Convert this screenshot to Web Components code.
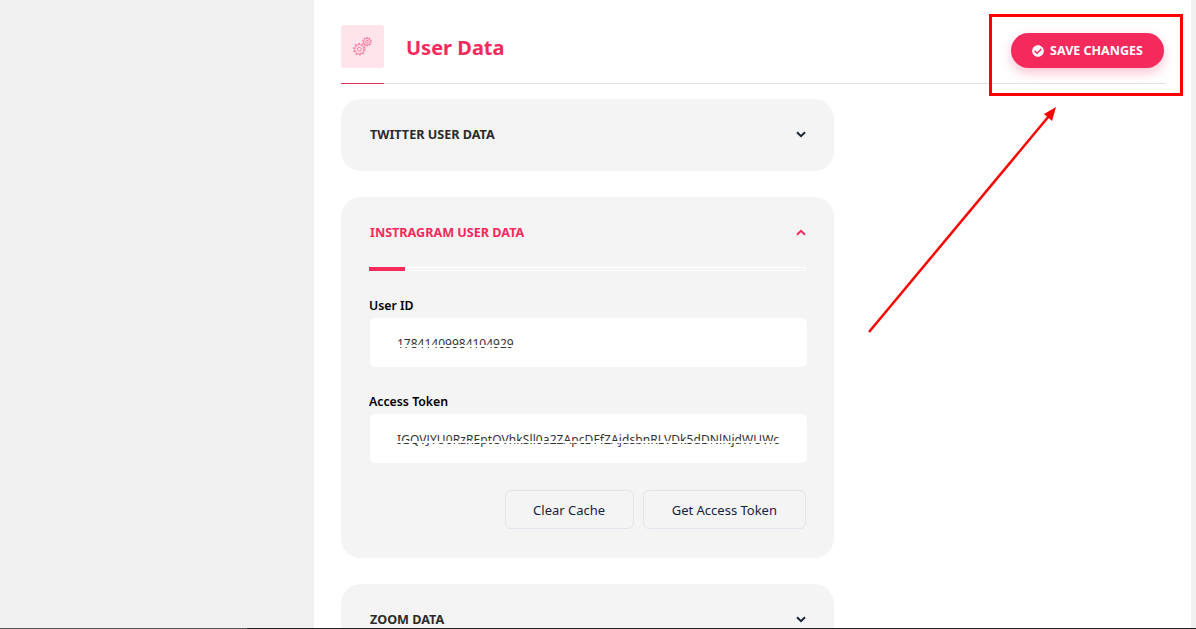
<!DOCTYPE html>
<html>
<head>
<meta charset="utf-8">
<title>User Data</title>
<style>
	html, body { margin: 0; height: 100%; overflow: hidden; background: #fff; }
	body { font-family: "Noto Sans", "Liberation Sans", sans-serif; }
</style>
</head>
<body>
<settings-page>
	<page-header title="User Data"></page-header>
	<data-card heading="TWITTER USER DATA"></data-card>
	<data-card heading="INSTRAGRAM USER DATA" open>
		<data-field label="User ID" value="17841409984104929"></data-field>
		<data-field label="Access Token" value="IGQVJYU0RzREptOVhkSll0a2ZApcDFfZAjdsbnRLVDk5dDNlNjdWUWc" style="--value-spacing: 0.09px"></data-field>
		<div slot="actions">
			<plain-button style="padding: 0 27.5px">Clear Cache</plain-button>
			<plain-button>Get Access Token</plain-button>
		</div>
	</data-card>
	<data-card heading="ZOOM DATA"></data-card>
</settings-page>
<annotation-layer></annotation-layer>

<script>
class SettingsPage extends HTMLElement {
	constructor() {
		super();
		this.attachShadow({ mode: 'open' });
		this.shadowRoot.innerHTML = `
		<style>
			:host { display: grid; grid-template-columns: 314px 1fr 5px; height: 629px; overflow: hidden; }
			.side { background: #f0f0f0; }
			.main { background: #fff; padding: 25px 25px 0 27px; overflow: hidden; }
			.edge { background: #f0f0f0; }
		</style>
		<div class="side"></div>
		<div class="main"><slot></slot></div>
		<div class="edge"></div>
		`
	}
}
customElements.define('settings-page', SettingsPage);

class PageHeader extends HTMLElement {
	constructor() {
		super();
		this.attachShadow({ mode: 'open' });
		this.shadowRoot.innerHTML = `
		<style>
			:host { display: flex; align-items: center; position: relative; box-sizing: border-box; padding-bottom: 15px; border-bottom: 1px solid #e2e2e6; margin-bottom: 15px; height: 59px; }
			.icon { width: 43px; height: 43px; border-radius: 3px; background: #ffe4eb; display: flex; align-items: center; justify-content: center; }
			h1 { margin: 2px 0 0 22px; font-size: 20px; font-weight: 700; color: #f52a5c; line-height: 43px; flex: 1; }
			/* accent under the icon box */
			.accent { position: absolute; left: 0; bottom: -1px; width: 43px; height: 1px; background: #e0305c; }
			.save { margin: 8px 2px 0 0; width: 153px; height: 35px; border-radius: 18px; background: #f52a5c; color: #fff; display: flex; align-items: center; justify-content: center; gap: 6px; font-size: 12.5px; font-weight: 700; box-shadow: 0 5px 12px rgba(245,42,92,.28); }
			.save svg { width: 12px; height: 12px; fill: #fff; }
		</style>
		<div class="icon">
			<svg width="43" height="43" viewBox="0 0 43 43" fill="none" stroke="#fb7397">
				<circle cx="18.3" cy="24.3" r="4.6" stroke-width=".9"/>
				<circle cx="18.3" cy="24.3" r="2" stroke-width=".9"/>
				<circle cx="18.3" cy="24.3" r="5.6" stroke-width="1.3" stroke-dasharray="1.8 1.72"/>
				<circle cx="26" cy="16.7" r="3.4" stroke-width=".9"/>
				<circle cx="26" cy="16.7" r="1.4" stroke-width=".9"/>
				<circle cx="26" cy="16.7" r="4.2" stroke-width="1.1" stroke-dasharray="1.4 1.24"/>
			</svg>
		</div>
		<h1></h1>
		<div class="save">
			<svg viewBox="0 0 512 512"><path d="M504 256c0 136.967-111.033 248-248 248S8 392.967 8 256 119.033 8 256 8s248 111.033 248 248zM227.314 387.314l184-184c6.248-6.248 6.248-16.379 0-22.627l-22.627-22.627c-6.248-6.249-16.379-6.249-22.628 0L216 308.118l-70.059-70.059c-6.248-6.248-16.379-6.248-22.628 0l-22.627 22.627c-6.248 6.248-6.248 16.379 0 22.627l104 104c6.249 6.25 16.379 6.25 22.628.001z"/></svg>
			<span>SAVE CHANGES</span>
		</div>
		<div class="accent"></div>
		`
	}
	connectedCallback() {
		this.shadowRoot.querySelector("h1").textContent = this.getAttribute("title");
	}
}
customElements.define('page-header', PageHeader);

class DataCard extends HTMLElement {
	constructor() {
		super();
		this.attachShadow({ mode: 'open' });
		this.shadowRoot.innerHTML = `
		<style>
			:host { display: block; width: 493px; background: #f4f4f4; border-radius: 20px; margin-bottom: 26px; box-sizing: border-box; padding: 0 28px; }
			.head { height: 72px; box-sizing: border-box; padding-bottom: 2px; display: flex; align-items: center; justify-content: space-between; font-size: 12.6px; font-weight: 700; color: #2b2b2b; }
			.head span { margin-left: 1px; }
			.head svg { width: 10px; height: 7px; fill: none; stroke: #1d2433; stroke-width: 2; }
			.rail { height: 4px; box-sizing: border-box; border: 1px solid #fff; position: relative; display: none; }
			.rail::before { content: ""; position: absolute; left: -1px; top: -1px; width: 36px; height: 4px; background: #f52a5c; }
			.body { display: none; }
			.actions { display: none; }
			::slotted([slot="actions"]) { display: flex; justify-content: flex-end; gap: 9px; }

			:host([open]) { padding-bottom: 29px; }
			:host([open]) .head { height: 70px; padding-bottom: 0; color: #f52a5c; }
			:host([open]) .head svg { stroke: #f52a5c; transform: rotate(180deg); }
			:host([open]) .rail { display: block; }
			:host([open]) .body { display: block; }
			:host([open]) .actions { display: block; margin-top: 27px; }
		</style>
		<div class="head">
			<span></span>
			<svg viewBox="0 0 10 7"><path d="M1 1.2 5 5.2 9 1.2"/></svg>
		</div>
		<div class="rail"></div>
		<div class="body"><slot></slot></div>
		<div class="actions"><slot name="actions"></slot></div>
		`
	}
	connectedCallback() {
		this.shadowRoot.querySelector(".head span").textContent = this.getAttribute("heading");
	}
}
customElements.define('data-card', DataCard);

class DataField extends HTMLElement {
	constructor() {
		super();
		this.attachShadow({ mode: 'open' });
		this.shadowRoot.innerHTML = `
		<style>
			:host { display: block; margin-top: 25px; }
			label { display: block; font-size: 12.3px; font-weight: 600; line-height: 18px; color: #000; padding-top: 1px; margin-bottom: 3px; }
			.box { margin: 0 -1px 0 1px; height: 49px; background: #fff; border-radius: 5px; box-sizing: border-box; padding: 2px 26px 0 27px; display: flex; align-items: center; position: relative; }
			.value { font-size: 12px; color: #333; white-space: nowrap; letter-spacing: var(--value-spacing, 0); }
			/* white stripe that blanks the value in the reference */
			.mask { position: absolute; left: 20px; right: 20px; top: 27px; height: 2px; background: #fff; }
		</style>
		<label></label>
		<div class="box"><div class="value"></div><div class="mask"></div></div>
		`
	}
	connectedCallback() {
		this.shadowRoot.querySelector("label").textContent = this.getAttribute("label");
		this.shadowRoot.querySelector(".value").textContent = this.getAttribute("value");
	}
}
customElements.define('data-field', DataField);

class PlainButton extends HTMLElement {
	constructor() {
		super();
		this.attachShadow({ mode: 'open' });
		this.shadowRoot.innerHTML = `
		<style>
			:host { display: inline-flex; align-items: center; justify-content: center; height: 39px; box-sizing: border-box; padding: 0 28px; border: 1px solid #e4e4ec; border-radius: 6px; font-size: 13px; color: #14233f; }
		</style>
		<slot></slot>
		`
	}
}
customElements.define('plain-button', PlainButton);

// red marks drawn over the screenshot
class AnnotationLayer extends HTMLElement {
	constructor() {
		super();
		this.attachShadow({ mode: 'open' });
		this.shadowRoot.innerHTML = `
		<style>
			:host { position: absolute; left: 0; top: 0; width: 1196px; height: 629px; pointer-events: none; }
			.box { position: absolute; left: 989px; top: 14px; width: 194px; height: 82px; box-sizing: border-box; border: 3px solid #f00; }
			svg { position: absolute; left: 0; top: 0; }
			.baseline { position: absolute; left: 0; top: 628px; width: 1196px; height: 1px; background: linear-gradient(to right, #5a5a5a 247px, #222 247px); }
		</style>
		<div class="box"></div>
		<svg width="1196" height="629" viewBox="0 0 1196 629">
			<path d="M869 332 1049 116" stroke="#f00" stroke-width="2.5" fill="none"/>
			<path d="M1056 107 1052 121 1044 114Z" fill="#f00"/>
		</svg>
		<div class="baseline"></div>
		`
	}
}
customElements.define('annotation-layer', AnnotationLayer);
</script>
</body>
</html>
